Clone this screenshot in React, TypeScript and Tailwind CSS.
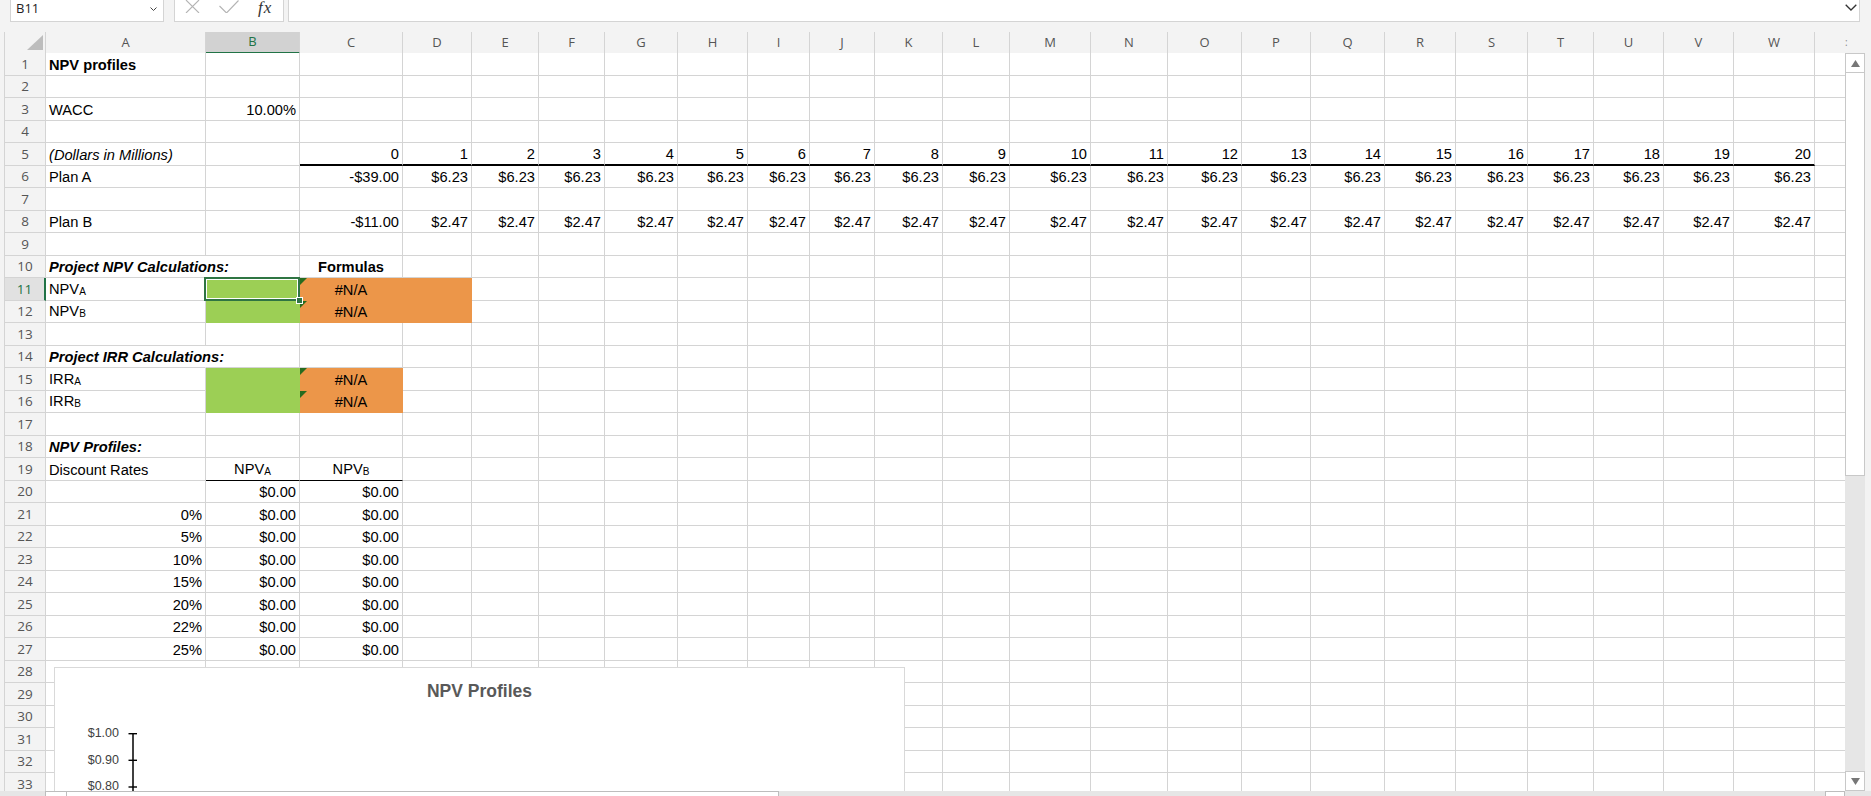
import type { ReactNode } from 'react';
import clsx from 'clsx';

type Cell = {
  v?: ReactNode;
  align?: 'left' | 'right' | 'center';
  font?: string;
  fill?: 'green' | 'orange';
  rule?: 'thick' | 'thin';
  spill?: boolean;
  flag?: boolean;
};

// row header + A..W + the partly hidden column past W
const COLS =
  'grid grid-cols-[41px_160px_94px_103px_69px_67px_66px_73px_70px_62px_65px_68px_67px_81px_77px_74px_69px_74px_71px_72px_66px_70px_70px_81px_60px]';
const LETTERS = 'ABCDEFGHIJKLMNOPQRSTUVW'.split('');
const ROWS = Array.from({ length: 33 }, (_, i) => i + 1);

const sub = (base: string, s: string) => (
  <>
    {base}
    <span className="relative top-[1px] text-[10px]">{s}</span>
  </>
);

const sheet: Record<number, Record<number, Cell>> = {
  1: { 0: { v: 'NPV profiles', font: 'font-bold' } },
  3: { 0: { v: 'WACC' }, 1: { v: '10.00%', align: 'right' } },
  5: { 0: { v: '(Dollars in Millions)', font: 'italic' } },
  6: { 0: { v: 'Plan A' }, 2: { v: '-$39.00', align: 'right' } },
  8: { 0: { v: 'Plan B' }, 2: { v: '-$11.00', align: 'right' } },
  10: {
    0: { v: 'Project NPV Calculations:', font: 'font-bold italic', spill: true },
    2: { v: 'Formulas', align: 'center', font: 'font-bold' },
  },
  11: {
    0: { v: sub('NPV', 'A') },
    1: { fill: 'green' },
    2: { v: '#N/A', align: 'center', fill: 'orange', flag: true },
    3: { fill: 'orange' },
  },
  12: {
    0: { v: sub('NPV', 'B') },
    1: { fill: 'green' },
    2: { v: '#N/A', align: 'center', fill: 'orange', flag: true },
    3: { fill: 'orange' },
  },
  14: { 0: { v: 'Project IRR Calculations:', font: 'font-bold italic', spill: true } },
  15: {
    0: { v: sub('IRR', 'A') },
    1: { fill: 'green' },
    2: { v: '#N/A', align: 'center', fill: 'orange', flag: true },
  },
  16: {
    0: { v: sub('IRR', 'B') },
    1: { fill: 'green' },
    2: { v: '#N/A', align: 'center', fill: 'orange', flag: true },
  },
  18: { 0: { v: 'NPV Profiles:', font: 'font-bold italic' } },
  19: {
    0: { v: 'Discount Rates' },
    1: { v: sub('NPV', 'A'), align: 'center', rule: 'thin' },
    2: { v: sub('NPV', 'B'), align: 'center', rule: 'thin' },
  },
  20: { 1: { v: '$0.00', align: 'right' }, 2: { v: '$0.00', align: 'right' } },
};

['0%', '5%', '10%', '15%', '20%', '22%', '25%'].forEach((rate, i) => {
  sheet[21 + i] = {
    0: { v: rate, align: 'right' },
    1: { v: '$0.00', align: 'right' },
    2: { v: '$0.00', align: 'right' },
  };
});

for (let year = 0; year <= 20; year++) {
  sheet[5][2 + year] = { v: String(year), align: 'right', rule: 'thick' };
  if (year > 0) {
    sheet[6][2 + year] = { v: '$6.23', align: 'right' };
    sheet[8][2 + year] = { v: '$2.47', align: 'right' };
  }
}

function SheetCell({ cell }: { cell?: Cell }) {
  const c = cell ?? {};
  return (
    <div
      className={clsx(
        'relative flex items-end whitespace-nowrap border-r px-[3px] pb-[1px] leading-[17px]',
        c.rule === 'thick' ? 'border-b-2' : 'border-b',
        c.fill === 'green' && 'border-[#9ccf55] bg-[#9ccf55]',
        c.fill === 'orange' && 'border-[#ec9649] bg-[#ec9649]',
        !c.fill && 'border-[#d4d4d4]',
        c.rule && 'border-b-black',
        c.spill && 'border-r-transparent',
        c.align === 'right' ? 'justify-end' : c.align === 'center' ? 'justify-center' : 'justify-start',
        c.font,
      )}
    >
      {c.flag && (
        <svg className="absolute left-0 top-0" width="7" height="7" viewBox="0 0 7 7">
          <path d="M0 0H7L0 7Z" fill="#276b1f" />
        </svg>
      )}
      <span>{c.v}</span>
    </div>
  );
}

function SheetRow({ n }: { n: number }) {
  const active = n === 11;
  return (
    <div className={clsx(COLS, n % 2 ? 'h-[23px]' : 'h-[22px]')}>
      <div
        className={clsx(
          "flex items-center justify-center border-b border-[#d4d4d4] font-['Open_Sans',sans-serif] text-[13.5px]",
          active
            ? 'border-r-2 border-r-[#217346] bg-[#e1e1e1] text-[#217346]'
            : 'border-r bg-[#f3f3f3] text-[#555]',
        )}
      >
        {n}
      </div>
      {Array.from({ length: 24 }, (_, col) => (
        <SheetCell key={col} cell={sheet[n]?.[col]} />
      ))}
    </div>
  );
}

function FormulaBar() {
  return (
    <div className="flex h-[32px] items-start font-['Open_Sans',sans-serif]">
      <div className="ml-[10px] flex h-[22px] w-[154px] items-start justify-between border border-t-0 border-[#d4d4d4] bg-white pl-[5px] pr-[6px]">
        <span className="pt-[2px] text-[13px] leading-[13px] text-[#222]">B11</span>
        <svg className="mt-[7px]" width="7" height="4" viewBox="0 0 7 4">
          <path d="M0.5 0.5L3.5 3.5L6.5 0.5" stroke="#444" fill="none" />
        </svg>
      </div>
      <div className="ml-[10px] flex h-[22px] w-[110px] items-start border border-t-0 border-[#d4d4d4] bg-white pl-[10px]">
        <svg width="15" height="13" viewBox="0 0 15 13">
          <path d="M1 0L14 13M14 0L1 13" stroke="#b4b4b4" strokeWidth="1.1" fill="none" />
        </svg>
        <svg className="ml-[19px]" width="20" height="13" viewBox="0 0 20 13">
          <path d="M0.5 6L7.5 13L19.5 0.5" stroke="#b4b4b4" strokeWidth="1.1" fill="none" />
        </svg>
        <span className="ml-[19px] font-['Liberation_Serif',serif] text-[17px] italic leading-[15px] tracking-[1px] text-[#333]">
          fx
        </span>
      </div>
      <div className="mr-[11px] ml-[4px] flex h-[22px] flex-1 items-start justify-end border border-t-0 border-[#d4d4d4] bg-white pr-[2px]">
        <svg className="mt-[4px]" width="12" height="7" viewBox="0 0 12 7">
          <path d="M0.7 0.7L6 6L11.3 0.7" stroke="#333" strokeWidth="1.3" fill="none" />
        </svg>
      </div>
    </div>
  );
}

function ColumnHeaders() {
  return (
    <div className="ml-[4px] h-[21px] w-[1862px] overflow-hidden border-l border-[#d4d4d4]">
      <div className={clsx(COLS, "h-full font-['Open_Sans',sans-serif] text-[13px] text-[#555]")}>
        <div className="relative border-r border-b border-[#d4d4d4]">
          <svg className="absolute right-[2px] bottom-[3px]" width="16" height="15" viewBox="0 0 16 15">
            <path d="M16 0V15H0Z" fill="#bdbdbd" />
          </svg>
        </div>
        {LETTERS.map((l) => (
          <div
            key={l}
            className={clsx(
              'flex items-center justify-center border-r border-[#d4d4d4]',
              l === 'B'
                ? 'border-b-2 border-b-[#217346] bg-[#d2d2d2] text-[#217346]'
                : 'border-b',
            )}
          >
            {l}
          </div>
        ))}
        <div className="flex items-center pl-[30px] text-[10px] text-[#888]">:</div>
      </div>
    </div>
  );
}

function ProfileChart() {
  const ticks = ['$1.00', '$0.90', '$0.80'];
  return (
    <div className="absolute left-[49px] top-[614px] h-[240px] w-[851px] border border-[#d9d9d9] bg-white">
      <h3 className="pt-[15px] text-center text-[17.5px] font-bold leading-[17.5px] text-[#595959]">
        NPV Profiles
      </h3>
      <div className="absolute left-0 top-[59px] flex w-[64px] flex-col items-end gap-[14px] text-[12.5px] leading-[12.5px] text-[#404040]">
        {ticks.map((t) => (
          <span key={t}>{t}</span>
        ))}
      </div>
      <svg className="absolute left-0 top-0" width="100" height="200" viewBox="0 0 100 200">
        <line x1="78" y1="65" x2="78" y2="200" stroke="#000" strokeWidth="1.5" />
        {[65.7, 92.3, 119].map((y) => (
          <line key={y} x1="73.5" x2="82" y1={y} y2={y} stroke="#000" strokeWidth="1.4" />
        ))}
      </svg>
    </div>
  );
}

function Selection() {
  return (
    <div className="absolute left-[199px] top-[224px] h-[24px] w-[96px] border-2 border-[#2f7543]">
      <div className="h-full w-full border border-white" />
      <div className="absolute -right-[5px] -bottom-[5px] h-[7px] w-[7px] border border-white bg-[#2f7543]" />
    </div>
  );
}

function ScrollBar() {
  return (
    <div className="flex w-[20px] flex-col bg-[#e6e6e6]">
      <div className="flex h-[20px] items-center justify-center border border-[#c8c8c8] bg-white">
        <svg width="9" height="7" viewBox="0 0 9 7">
          <path d="M4.5 0L9 7H0Z" fill="#777" />
        </svg>
      </div>
      <div className="h-[403px] border-x border-b border-[#c8c8c8] bg-white" />
      <div className="flex-1" />
      <div className="flex h-[20px] items-center justify-center border border-[#c8c8c8] bg-white">
        <svg width="9" height="7" viewBox="0 0 9 7">
          <path d="M0 0H9L4.5 7Z" fill="#777" />
        </svg>
      </div>
    </div>
  );
}

export default function App() {
  return (
    <div className="flex h-[796px] w-[1871px] flex-col overflow-hidden bg-[#f3f3f3] font-['Liberation_Sans',Arial,sans-serif] text-[14.67px] text-black">
      <FormulaBar />
      <ColumnHeaders />
      <div className="flex h-[738px]">
        <div className="relative ml-[4px] w-[1841px] overflow-hidden border-l border-[#d4d4d4] bg-white">
          {ROWS.map((n) => (
            <SheetRow key={n} n={n} />
          ))}
          <Selection />
          <ProfileChart />
        </div>
        <ScrollBar />
      </div>
      <div className="flex h-[5px] bg-[#e6e6e6]">
        <div className="ml-[45px] flex w-[734px] border-x border-t border-[#bdbdbd] bg-white">
          <div className="ml-[20px] w-px bg-[#bdbdbd]" />
        </div>
        <div className="mr-[26px] ml-auto w-[20px] border-x border-t border-[#bdbdbd] bg-white" />
      </div>
    </div>
  );
}
